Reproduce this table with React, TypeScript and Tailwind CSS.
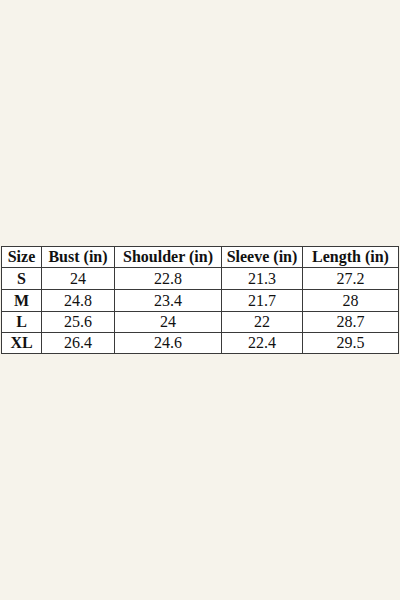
import React from "react";

const headers = ["Size", "Bust (in)", "Shoulder (in)", "Sleeve (in)", "Length (in)"];
const rows = [
  ["S", "24", "22.8", "21.3", "27.2"],
  ["M", "24.8", "23.4", "21.7", "28"],
  ["L", "25.6", "24", "22", "28.7"],
  ["XL", "26.4", "24.6", "22.4", "29.5"],
];
const widths = [40, 73, 107, 81, 96];

export default function App() {
  return (
    <div className="w-[400px] h-[600px] bg-[#f6f3eb] pt-[246px] pl-[1px] font-['Liberation_Serif','Times_New_Roman',serif]">
      <table className="bg-white border-collapse table-fixed w-[397px] text-[#111] text-[16px] leading-none font-['Liberation_Serif','Times_New_Roman',serif]">
        <colgroup>
          {widths.map((w, i) => (
            <col key={i} style={{ width: w }} />
          ))}
        </colgroup>
        <thead>
          <tr className="h-[21px]">
            {headers.map((h) => (
              <th key={h} className="border border-[#3a3a3a] font-bold text-center p-0 whitespace-nowrap">
                {h}
              </th>
            ))}
          </tr>
        </thead>
        <tbody>
          {rows.map((r, ri) => (
            <tr key={ri} className={ri === 0 || ri === 1 ? "h-[22px]" : "h-[21px]"}>
              {r.map((c, ci) => (
                <td key={ci} className={`border border-[#3a3a3a] text-center p-0 ${ci === 0 ? "font-bold" : ""}`}>
                  {c}
                </td>
              ))}
            </tr>
          ))}
        </tbody>
      </table>
    </div>
  );
}
